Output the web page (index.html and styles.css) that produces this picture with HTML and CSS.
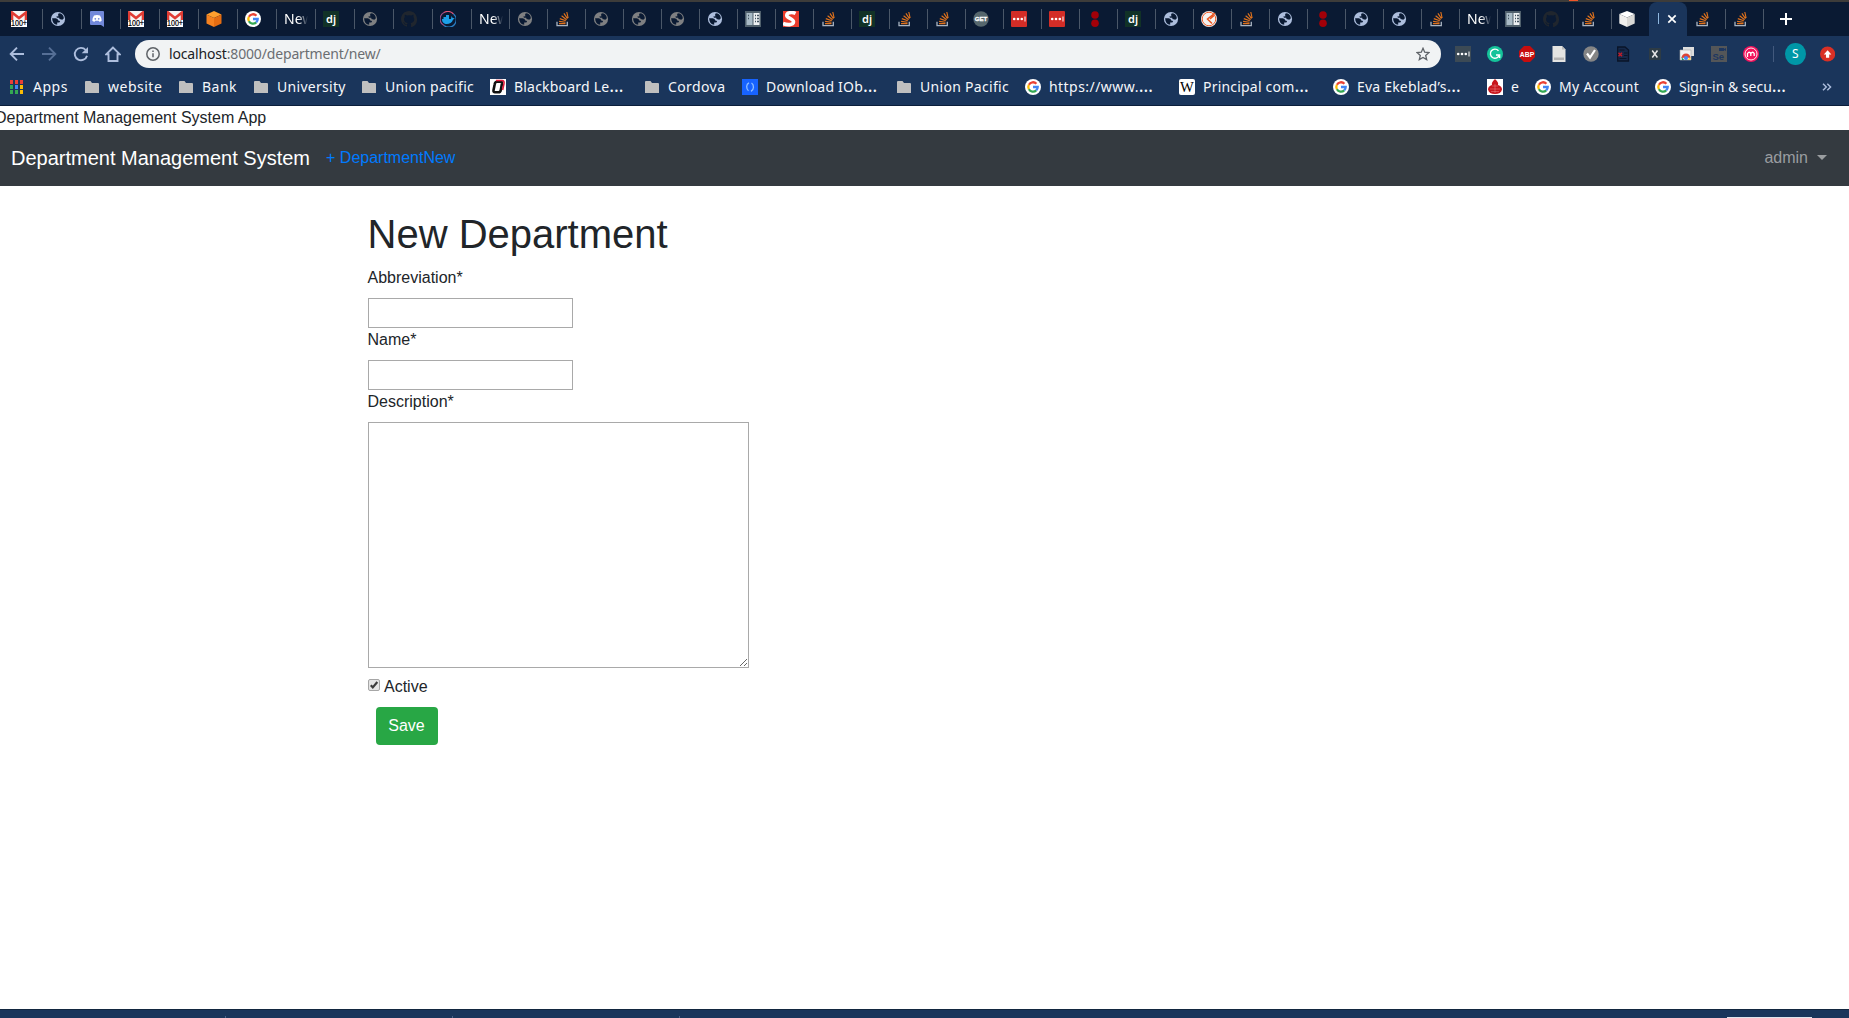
FILE: index.html
```html
<!DOCTYPE html>
<html lang="en">
<head>
<meta charset="utf-8">
<title>New Department</title>
<link rel="stylesheet" href="styles.css">
</head>
<body>
<svg class="defs" width="0" height="0">
  <symbol id="gm" viewBox="0 0 16 16"><path fill="#f4f4f4" d="M0 0h16v15H0z"/><path d="M1 15V1.500L8 7l7-5.500V15" fill="none" stroke="#e03c34" stroke-width="2.600"/><path fill="#fff" d="M0 9h16v7H0z"/><text x="0" y="15.300" font-size="8.500" textLength="16" lengthAdjust="spacingAndGlyphs" fill="#000" stroke="#000" stroke-width=".2" font-family="Liberation Sans, sans-serif">100+</text></symbol>
  <symbol id="globe" viewBox="0 0 16 16"><circle cx="8" cy="8" r="7.100" fill="currentColor"/><path fill="#0a1a33" d="M8.800 2.300C11.500 2.300 13.600 4.200 13.900 7.200L12.300 8.700 9.500 7.900 9.200 6.700H7L6.300 5.600 8.500 5.200 8 3.700zM2.100 7.300h3.600q2.300.3 2.600 2.200l1.700.4q.2 1.600-1.500 1.700H7.200v2.200Q2.400 13.300 2.100 7.300z"/></symbol>
  <symbol id="discord" viewBox="0 0 16 16"><path fill="#7289da" d="M2 0h12q1 0 1 1v15l-3-2H2q-1 0-1-1V1q0-1 1-1z"/><path fill="#fff" d="M5 4.500q3-1 6 0 1.500 2 1.700 5.300-1 1-2.300 1l-.7-1H6.300l-.7 1q-1.300 0-2.300-1Q3.500 6.500 5 4.500z"/><circle cx="6.300" cy="7.800" r=".9" fill="#7289da"/><circle cx="9.700" cy="7.800" r=".9" fill="#7289da"/></symbol>
  <symbol id="box" viewBox="0 0 16 16"><path fill="#ffa02e" d="M8 0l7.500 3.500L8 7 .5 3.500z"/><path fill="#f58220" d="M.5 3.500L8 7v9L.5 12.500z"/><path fill="#e56d12" d="M15.500 3.500L8 7v9l7.500-3.500z"/></symbol>
  <symbol id="cube" viewBox="0 0 16 16"><path fill="#fff" d="M8 0l7.700 3L8 6.500.3 3z"/><path fill="#f0efed" d="M.3 3L8 6.500V16L.3 12.500z"/><path fill="#d9d8d5" d="M15.700 3L8 6.500V16l7.700-3.500z"/></symbol>
  <symbol id="goog" viewBox="0 0 16 16"><circle cx="8" cy="8" r="8" fill="#fff"/><g fill="none" stroke-width="2.300"><path stroke="#ea4335" d="M3.900 5.700A4.700 4.700 0 0 1 11.400 4.700"/><path stroke="#fbbc05" d="M3.900 5.700A4.700 4.700 0 0 0 3.900 10.300"/><path stroke="#34a853" d="M3.900 10.300A4.700 4.700 0 0 0 11.200 11.400"/><path stroke="#4285f4" d="M11.200 11.400A4.700 4.700 0 0 0 12.700 8H8"/></g></symbol>
  <symbol id="dj" viewBox="0 0 16 16"><path fill="#113227" d="M0 0h16v16H0z"/><text x="3" y="11.500" font-size="11" font-weight="600" fill="#fff" font-family="Noto Sans, sans-serif">dj</text></symbol>
  <symbol id="gh" viewBox="0 0 16 16"><path fill="#20262e" d="M8 0C3.580 0 0 3.580 0 8c0 3.540 2.290 6.530 5.470 7.590.4.070.55-.17.55-.38v-1.490c-2.010.37-2.530-.49-2.690-.94-.4-.9-.9-1.200-1.300-1.500.9-.3 1.500.5 1.900 1.100.7 1.200 1.900.9 2.200.7.1-.6.300-.9.600-1.100-1.800-.2-3.700-.9-3.700-4 0-.9.300-1.600.8-2.100-.1-.2-.4-1 .1-2.100 0 0 .7-.2 2.200.8a7.500 7.500 0 0 1 4 0c1.500-1 2.200-.8 2.200-.8.500 1.100.2 1.900.1 2.100.5.600.8 1.300.8 2.100 0 3.100-1.900 3.800-3.700 4 .3.300.5.700.5 1.500v2.200c0 .2.200.5.600.4A8 8 0 0 0 16 8c0-4.420-3.580-8-8-8z"/></symbol>
  <symbol id="docker" viewBox="0 0 16 16"><path d="M4 1.500A7.400 7.400 0 0 0 4 14.500" fill="none" stroke="#9b4f87" stroke-width="1.200"/><path d="M4 1.500A7.400 7.400 0 0 1 13.500 3" fill="none" stroke="#e0567a" stroke-width="1.200"/><path d="M4 14.500A7.400 7.400 0 0 0 13.500 3" fill="none" stroke="#2b7fc4" stroke-width="1.200"/><path fill="#1d9fe8" d="M2 8h9l.5-3 1.200 2 2 .3-1.700 1.500C12 12 9.500 13 6.800 13 4 13 2 11.500 2 8zM3.500 6h5.500v2H3.500zM6 4h3v2H6z"/></symbol>
  <symbol id="so" viewBox="0 0 16 16"><path fill="none" stroke="#a9b4c2" stroke-width="1.300" d="M2 10.700v3.900h10.300v-3.900"/><path fill="none" stroke="#e0721c" stroke-width="1.150" d="M4 12.600h6.500M4.100 10.400l6.400.9M4.800 7.600l6 2.100M6.600 4.700l5 4M8.900 2.400l3.600 5.200M11.800 1l1.300 6"/></symbol>
  <symbol id="book" viewBox="0 0 16 16"><path fill="#50606c" d="M0 0h16v16H0z"/><path fill="#a9bbc6" d="M1.500 2h6v12h-6z"/><path fill="#eef1f3" d="M8.500 2h6v12h-6z"/><path stroke="#445562" stroke-width="1.300" d="M3 4.500h1M3 7.500h1M10 4.500h1M12 4.500h2M10 7.500h1M12 7.500h2M10 10.500h1M12 10.500h2"/></symbol>
  <symbol id="ss" viewBox="0 0 16 16"><path fill="#ea3c2c" d="M0 0h16v16H0z"/><path d="M12.500 2.500C9 .8 3.500 1.500 3.800 4.500 4 7.300 10.500 7.500 10.500 10.800 10.500 14.300 4 14.200 0 12.500" fill="none" stroke="#fff" stroke-width="3.600"/></symbol>
  <symbol id="get" viewBox="0 0 16 16"><circle cx="8" cy="8" r="7.700" fill="#56676d"/><text x="1.700" y="10.200" font-size="6" font-weight="700" fill="#fff" stroke="#fff" stroke-width=".3" textLength="12.600" lengthAdjust="spacingAndGlyphs" font-family="Liberation Sans, sans-serif">GET</text></symbol>
  <symbol id="lp" viewBox="0 0 16 16"><rect width="16" height="16" rx="1" fill="#d32d27"/><path fill="#fff" d="M13.500 5.500h1v5h-1z"/><circle cx="3.200" cy="8" r="1.300" fill="#fff"/><circle cx="7" cy="8" r="1.300" fill="#fff"/><circle cx="10.800" cy="8" r="1.300" fill="#fff"/></symbol>
  <symbol id="dots" viewBox="0 0 16 16"><circle cx="8" cy="4" r="3.800" fill="#a30008"/><circle cx="8" cy="12.200" r="3.800" fill="#a30008"/></symbol>
  <symbol id="orc" viewBox="0 0 16 16"><circle cx="8" cy="8" r="8" fill="#f4f1ef"/><circle cx="8" cy="8" r="6.800" fill="none" stroke="#f05a28" stroke-width="1"/><path fill="none" stroke="#e9541f" stroke-width="1.500" d="M14 2L6.500 8l4.500 4.500M9 8l4-3.500"/></symbol>
  <symbol id="folder" viewBox="0 0 16 16"><path fill="#bfbfbf" d="M1 3q0-1 1-1h4.500L8 4h6q1 0 1 1v9H1z"/></symbol>
</svg>

<div class="topedge"></div>
<div class="tabs">
  <div class="tab wide"><svg class="ic"><use href="#gm"/></svg></div>
  <div class="tab wide"><svg class="ic"><use href="#globe"/></svg></div>
  <div class="tab wide"><svg class="ic"><use href="#discord"/></svg></div>
  <div class="tab wide"><svg class="ic"><use href="#gm"/></svg></div>
  <div class="tab wide"><svg class="ic"><use href="#gm"/></svg></div>
  <div class="tab wide"><svg class="ic"><use href="#box"/></svg></div>
  <div class="tab wide"><svg class="ic"><use href="#goog"/></svg></div>
  <div class="tab wide"><span class="cut">New</span></div>
  <div class="tab wide"><svg class="ic"><use href="#dj"/></svg></div>
  <div class="tab wide dim"><svg class="ic"><use href="#globe"/></svg></div>
  <div class="tab wide"><svg class="ic"><use href="#gh"/></svg></div>
  <div class="tab wide"><svg class="ic"><use href="#docker"/></svg></div>
  <div class="tab"><span class="cut">New</span></div>
  <div class="tab dim"><svg class="ic"><use href="#globe"/></svg></div>
  <div class="tab"><svg class="ic"><use href="#so"/></svg></div>
  <div class="tab dim"><svg class="ic"><use href="#globe"/></svg></div>
  <div class="tab dim"><svg class="ic"><use href="#globe"/></svg></div>
  <div class="tab dim"><svg class="ic"><use href="#globe"/></svg></div>
  <div class="tab"><svg class="ic"><use href="#globe"/></svg></div>
  <div class="tab"><svg class="ic"><use href="#book"/></svg></div>
  <div class="tab"><svg class="ic"><use href="#ss"/></svg></div>
  <div class="tab"><svg class="ic"><use href="#so"/></svg></div>
  <div class="tab"><svg class="ic"><use href="#dj"/></svg></div>
  <div class="tab"><svg class="ic"><use href="#so"/></svg></div>
  <div class="tab"><svg class="ic"><use href="#so"/></svg></div>
  <div class="tab"><svg class="ic"><use href="#get"/></svg></div>
  <div class="tab"><svg class="ic"><use href="#lp"/></svg></div>
  <div class="tab"><svg class="ic"><use href="#lp"/></svg></div>
  <div class="tab"><svg class="ic"><use href="#dots"/></svg></div>
  <div class="tab"><svg class="ic"><use href="#dj"/></svg></div>
  <div class="tab"><svg class="ic"><use href="#globe"/></svg></div>
  <div class="tab"><svg class="ic"><use href="#orc"/></svg></div>
  <div class="tab"><svg class="ic"><use href="#so"/></svg></div>
  <div class="tab"><svg class="ic"><use href="#globe"/></svg></div>
  <div class="tab"><svg class="ic"><use href="#dots"/></svg></div>
  <div class="tab"><svg class="ic"><use href="#globe"/></svg></div>
  <div class="tab"><svg class="ic"><use href="#globe"/></svg></div>
  <div class="tab"><svg class="ic"><use href="#so"/></svg></div>
  <div class="tab"><span class="cut">New</span></div>
  <div class="tab"><svg class="ic"><use href="#book"/></svg></div>
  <div class="tab"><svg class="ic"><use href="#gh"/></svg></div>
  <div class="tab"><svg class="ic"><use href="#so"/></svg></div>
  <div class="tab"><svg class="ic"><use href="#cube"/></svg></div>
  <div class="tab active"><i class="stem"></i><svg class="close" viewBox="0 0 10 10"><path d="M1.300 1.300l7.400 7.400M8.700 1.300L1.300 8.700"/></svg></div>
  <div class="tab bare"><svg class="ic"><use href="#so"/></svg></div>
  <div class="tab"><svg class="ic"><use href="#so"/></svg></div>
  <div class="tab"><svg class="plus" viewBox="0 0 12 12"><path d="M6 0v12M0 6h12"/></svg></div>
</div>

<div class="toolbar">
  <svg class="nav" viewBox="0 0 16 16"><path d="M15 8H2M8 1.700L1.700 8 8 14.300"/></svg>
  <svg class="nav off" viewBox="0 0 16 16"><path d="M1 8h13M8 1.700L14.300 8 8 14.300"/></svg>
  <svg class="nav" viewBox="0 0 16 16"><path d="M14 9.700A6.200 6.200 0 1 1 12.700 4"/><path class="solid" d="M15 1v6.300H8.700z"/></svg>
  <svg class="nav" viewBox="0 0 16 16"><path d="M8 1.500L1.200 8.300H3.500V15h9V8.300h2.300z"/></svg>
  <div class="omni">
    <svg class="info" viewBox="0 0 14 14"><circle cx="7" cy="7" r="6.200"/><path d="M7 6.300V10.300M7 3.600V5"/></svg>
    <span class="url"><b>localhost</b>:8000/department/new/</span>
    <svg class="star" viewBox="0 0 14 14"><path d="M7 1.300l1.700 3.900 4.200.4-3.200 2.800 1 4.200L7 10.400l-3.700 2.200 1-4.200L1.100 5.600l4.200-.4z"/></svg>
  </div>
  <div class="exts">
    <svg viewBox="0 0 16 16"><rect width="16" height="16" fill="#3c4a55"/><g fill="#fff"><circle cx="3.200" cy="8" r="1.300"/><circle cx="7" cy="8" r="1.300"/><circle cx="10.800" cy="8" r="1.300"/><path d="M13.500 5.500h1v5h-1z"/></g></svg>
    <svg viewBox="0 0 16 16"><circle cx="8" cy="8" r="8" fill="#15c39a"/><path d="M11.500 4.700A4.600 4.600 0 1 0 12.400 9H9M12.600 8.500v3.500" fill="none" stroke="#fff" stroke-width="1.400"/></svg>
    <svg viewBox="0 0 16 16"><path fill="#c70d0d" d="M5 0h6l5 5v6l-5 5H5l-5-5V5z"/><text x=".8" y="10.900" font-size="8" font-weight="700" fill="#fff" textLength="14.400" lengthAdjust="spacingAndGlyphs" font-family="Liberation Sans, sans-serif">ABP</text></svg>
    <svg viewBox="0 0 16 16"><path fill="#e4e4e2" d="M1.500 0h9.500l3.500 3.500V16h-13z"/><path fill="#bcbcba" d="M11 0v3.500h3.500z"/><path fill="#b4b4b4" d="M3 11.500h10v2.500H3z"/></svg>
    <svg viewBox="0 0 16 16"><circle cx="8" cy="8" r="7.700" fill="#858585"/><path d="M4 7.500l3 4 5-7.500" fill="none" stroke="#fff" stroke-width="2.200"/></svg>
    <svg viewBox="0 0 16 16"><path fill="#16294a" stroke="#0a1428" stroke-width="1.300" d="M2.700 1h7.300l3.500 3v11H2.700z"/><path stroke="#0a1428" stroke-width="1.200" d="M4.500 4h5M4.500 12.500h7M9 7h3.500M9 9.500h3.500"/><path stroke="#c01d2a" stroke-width="1.500" d="M3.500 6.800l3.500 3.500M7 6.800l-3.500 3.500"/></svg>
    <svg viewBox="0 0 16 16"><rect x="2" y="2" width="12" height="12" rx="1" fill="#2d3b45"/><path stroke="#e6e6e6" stroke-width="1.500" d="M5.200 4.500l5.200 7M10.500 4.500l-5.200 7"/></svg>
    <svg viewBox="0 0 16 16"><path fill="#ddd" d="M4 1h11v9H4z"/><path fill="#f2f2f2" stroke="#aaa" stroke-width=".6" d="M1 4h11v10H1z"/><path fill="#db4437" d="M2.500 12a4.500 4.500 0 0 1 9 0l-2-.2H5z"/><path fill="#0f9d58" d="M2.500 11l2.700 3H3z"/><path fill="#ffcd40" d="M11.500 11v3H8z"/><circle cx="7" cy="12" r="2" fill="#4285f4"/></svg>
    <svg viewBox="0 0 16 16"><path fill="#545658" d="M0 0h16v16H0z"/><path fill="#1e3760" d="M8 2h5v1l2-1v3l-2-1v1H8z"/><text x="1.500" y="14" font-size="9.500" fill="#1e3760" font-weight="700" font-family="Liberation Sans, sans-serif">Se</text></svg>
    <svg viewBox="0 0 16 16"><circle cx="8" cy="8" r="8" fill="#f2135c"/><circle cx="8" cy="8" r="6" fill="none" stroke="#fff" stroke-width=".9"/><path fill="none" stroke="#fff" stroke-width="1.300" d="M4.500 11V7.500Q6.200 5 7.800 7.500V10M7.800 7.500Q9.700 5 11.200 7.500V10"/></svg>
  </div>
  <i class="divide"></i>
  <span class="avatar">S</span>
  <svg class="update" viewBox="0 0 16 16"><circle cx="8" cy="8" r="8" fill="#d93025"/><path fill="#fff" d="M8 4l4 4.500H9.700V12H6.300V8.500H4z"/></svg>
</div>

<div class="marks">
  <div class="mark" style="width:75px;letter-spacing:.5px"><svg class="ic" viewBox="0 0 16 16"><path fill="#ea3e36" d="M1 1h3v4H1zM6 1h3v4H6zM11 1h3v4h-3z"/><path fill="#34a853" d="M1 6h3v4H1zM1 11h3v4H1z"/><path fill="#4285f4" d="M6 6h3v4H6z"/><path fill="#34a853" d="M6 11h3v4H6z"/><path fill="#fbbc05" d="M11 6h3v4h-3zM11 11h3v4h-3z"/></svg><span>Apps</span></div>
  <div class="mark" style="width:94px;letter-spacing:.5px"><svg class="ic"><use href="#folder"/></svg><span>website</span></div>
  <div class="mark" style="width:75px;letter-spacing:.5px"><svg class="ic"><use href="#folder"/></svg><span>Bank</span></div>
  <div class="mark" style="width:108px;letter-spacing:.3px"><svg class="ic"><use href="#folder"/></svg><span>University</span></div>
  <div class="mark" style="width:129px;letter-spacing:.3px"><svg class="ic"><use href="#folder"/></svg><span>Union pacific</span></div>
  <div class="mark" style="width:154px;letter-spacing:.2px"><svg class="ic" viewBox="0 0 16 16"><path fill="#fff" d="M0 0h16v16H0z"/><path d="M7 2.700h4Q12.200 2.700 12 4.500l-1.200 6.500q-.4 2.300-2.300 2.300H5Q3.200 13.300 3.500 11.300l1.200-6q.4-2.600 2.300-2.600z" fill="none" stroke="#111" stroke-width="2.600"/><path d="M6 1.500h6Q14.500 1.500 14 4.500l-1.400 6.500" fill="none" stroke="#e21b3c" stroke-width="1.600"/></svg><span>Blackboard Le<em>…</em></span></div>
  <div class="mark" style="width:98px;letter-spacing:.4px"><svg class="ic"><use href="#folder"/></svg><span>Cordova</span></div>
  <div class="mark" style="width:154px;letter-spacing:.2px"><svg class="ic" viewBox="0 0 16 16"><path fill="#1763ff" d="M0 0h16v16H0z"/><path d="M7 3.800C4 5 4 10 6.500 11.800M9 12.300c3.200-1.500 3.200-6.500.5-8.300" fill="none" stroke="#8fbfff" stroke-width="1.300"/></svg><span>Download IOb<em>…</em></span></div>
  <div class="mark" style="width:129px;letter-spacing:.3px"><svg class="ic"><use href="#folder"/></svg><span>Union Pacific</span></div>
  <div class="mark" style="width:154px;letter-spacing:.45px"><svg class="ic"><use href="#goog"/></svg><span>https://www.<em>…</em></span></div>
  <div class="mark" style="width:154px;letter-spacing:.2px"><svg class="ic" viewBox="0 0 16 16"><rect width="16" height="16" rx="2" fill="#fff"/><text x="1" y="13" font-size="14" textLength="14" lengthAdjust="spacingAndGlyphs" font-family="Liberation Serif, serif">W</text></svg><span>Principal com<em>…</em></span></div>
  <div class="mark" style="width:154px;letter-spacing:.2px"><svg class="ic"><use href="#goog"/></svg><span>Eva Ekeblad’s<em>…</em></span></div>
  <div class="mark" style="width:48px"><svg class="ic" viewBox="0 0 16 16"><path fill="#fff" d="M0 0h16v16H0z"/><path fill="#c8161d" d="M8 0q4 3.500 3 6 4 1 4 4.500-1 4.500-7 4.500T1 10.500Q1 7 5 6 4 3.500 8 0z"/><path stroke="#ee8d8d" stroke-width=".5" d="M3 10h10M5 7h6M4 12.500h8M8 5v9"/></svg><span>e</span></div>
  <div class="mark" style="width:120px;letter-spacing:.35px"><svg class="ic"><use href="#goog"/></svg><span>My Account</span></div>
  <div class="mark" style="width:167px;letter-spacing:0"><svg class="ic"><use href="#goog"/></svg><span>Sign-in &amp; secu<em>…</em></span></div>
  <svg class="more" viewBox="0 0 10 8"><path d="M1 .7L4.300 4 1 7.300M5.300.7L8.600 4 5.300 7.300"/></svg>
</div>

<main class="page">
  <div class="apptitle">Department Management System App</div>
  <nav class="navbar">
    <span class="brand">Department Management System</span>
    <a class="newlink">+ DepartmentNew</a>
    <span class="user">admin<i class="caret"></i></span>
  </nav>
  <form class="form">
    <h1>New Department</h1>
    <label class="lbl">Abbreviation*</label>
    <input class="field" type="text">
    <label class="lbl">Name*</label>
    <input class="field" type="text">
    <label class="lbl">Description*</label>
    <textarea class="area"></textarea>
    <div class="check"><svg class="cb" viewBox="0 0 12 12"><rect x=".5" y=".5" width="11" height="11" rx="1.500" fill="#e4e4e4" stroke="#a6a6a6"/><path d="M2.800 6.200l2 2.200 4.500-5.400" fill="none" stroke="#3b3b3b" stroke-width="2.200"/></svg><span>Active</span></div>
    <button class="save" type="button">Save</button>
  </form>
</main>
<footer class="dock"><i></i><i></i><i></i><b></b></footer>
</body>
</html>
```
FILE: styles.css
```css
* { box-sizing: border-box; }
body {
  margin: 0;
  width: 1849px;
  height: 1018px;
  overflow: hidden;
  display: flex;
  flex-direction: column;
  background: #fff;
  font-family: "Liberation Sans", Arial, sans-serif;
}
.defs { position: absolute; }
.topedge {
  height: 2px;
  flex: none;
  background: linear-gradient(#f0562a, #f0562a) 1569px 0 / 9px 1px no-repeat #3d3c3a;
}

/* tab strip */
.tabs {
  height: 34px;
  flex: none;
  display: flex;
  padding-left: 3px;
  background: #0a1a33;
  color: #adbedd;
}
.tab { width: 38px; height: 34px; flex: none; display: flex; align-items: center; }
.tab.wide { width: 39px; }
.tab::before {
  content: "";
  width: 1px;
  height: 20px;
  margin-right: 7px;
  background: #4a5768;
}
.tab:first-child::before, .tab.active::before, .tab.bare::before { background: none; }
.tab.dim { color: #7f8082; }
.ic { width: 16px; height: 16px; flex: none; display: block; }
.cut {
  width: 24px;
  overflow: hidden;
  white-space: nowrap;
  font: 14px/20px "Noto Sans", sans-serif;
  color: #fff;
  -webkit-mask-image: linear-gradient(90deg, #000 14px, transparent 24px);
  mask-image: linear-gradient(90deg, #000 14px, transparent 24px);
}
.tab.active { background: #1a355b; border-radius: 8px 8px 0 0; }
.tab.active .stem { width: 1px; height: 11px; margin: -2px 8px 0 1px; background: #8fb8e0; }
.close { width: 10px; height: 10px; fill: none; stroke: #fff; stroke-width: 1.700; }
.plus { width: 12px; height: 12px; margin-left: 9px; fill: none; stroke: #fff; stroke-width: 2; }

/* address row */
.toolbar {
  height: 36px;
  flex: none;
  display: flex;
  align-items: center;
  padding: 0 14px 0 9px;
  background: #1a355b;
}
.nav { width: 16px; height: 16px; margin-right: 16px; flex: none; fill: none; stroke: #adbedd; stroke-width: 1.900; }
.nav.off { stroke: #566f96; }
.nav .solid { fill: #adbedd; stroke: none; }
.omni {
  width: 1306px;
  height: 28px;
  margin-left: -2px;
  flex: none;
  display: flex;
  align-items: center;
  padding: 0 11px;
  border-radius: 14px;
  background: #f1f3f4;
}
.info { width: 14px; height: 14px; fill: none; stroke: #5f6368; stroke-width: 1.500; }
.url { flex: 1; margin-left: 9px; font: 14px/20px "Noto Sans", sans-serif; letter-spacing: -.16px; color: #6b6e72; }
.url b { font-weight: 400; color: #202124; }
.star { width: 14px; height: 14px; fill: none; stroke: #5f6368; stroke-width: 1.300; }
.exts { display: flex; gap: 16px; margin-left: 14px; }
.exts svg { width: 16px; height: 16px; }
.divide { width: 1px; height: 16px; margin: 0 11px 0 14px; background: #42597d; }
.avatar {
  width: 22px;
  height: 22px;
  border-radius: 50%;
  background: #0097a7;
  color: #fff;
  text-align: center;
  font: 12px/22px "Noto Sans", sans-serif;
}
.update { width: 16px; height: 16px; margin-left: 14px; }

/* bookmarks */
.marks {
  height: 34px;
  flex: none;
  display: flex;
  padding: 7px 0 0 9px;
  background: #1a355b;
  border-bottom: 1px solid #0b1e3b;
}
.mark {
  display: flex;
  flex: none;
  gap: 8px;
  height: 16px;
  white-space: nowrap;
  color: #f5f7fa;
  font: 14px/16px "Noto Sans", sans-serif;
}
.mark em { font-style: normal; font-size: 18px; line-height: 0; }
.more { width: 10px; height: 8px; margin-top: 4px; fill: none; stroke: #adbedd; stroke-width: 1.400; }

/* web page */
.page { flex: 1; min-height: 0; color: #212529; font-size: 16px; line-height: 24px; }
.apptitle { margin-left: -5px; }
.navbar { height: 56px; display: flex; align-items: center; padding: 0 22px 0 11px; background: #343a40; }
.brand { font-size: 20px; line-height: 30px; color: #fff; margin-right: 16px; }
.newlink { color: #007bff; }
.user { margin-left: auto; display: flex; align-items: center; color: #9a9da0; }
.caret { margin: -2px 0 0 9px; border: 5px solid transparent; border-top-color: #9a9da0; border-bottom: 0; }
.form { margin: 24px 0 0 367.5px; display: flex; flex-direction: column; align-items: flex-start; }
h1 { margin: 0 0 8px; font-size: 40px; line-height: 48px; font-weight: 400; }
.lbl { margin-bottom: 8px; }
.field { width: 205px; height: 30px; border: 1px solid #a9a9a9; background: #fff; }
.area { width: 381px; height: 246px; border: 1px solid #a9a9a9; background: #fff; }
.check { display: flex; align-items: center; gap: 4.5px; height: 24px; margin-top: 7px; }
.cb { width: 12px; height: 12px; margin-top: -4px; }
.save {
  width: 62px;
  height: 38px;
  margin: 8px 0 0 8px;
  padding: 0;
  border: 0;
  border-radius: 4px;
  background: #28a745;
  color: #fff;
  font: 16px/24px "Liberation Sans", Arial, sans-serif;
}

/* desktop panel */
.dock {
  height: 9px;
  flex: none;
  display: flex;
  align-items: flex-end;
  padding-left: 225px;
  gap: 226px;
  background: #1a355b;
  border-top: 1px solid #12263f;
}
.dock i { width: 1px; height: 2px; background: #4d638a; }
.dock b { width: 85px; height: 1px; margin: 0 37px 0 auto; background: #dfe4ec; }
```
